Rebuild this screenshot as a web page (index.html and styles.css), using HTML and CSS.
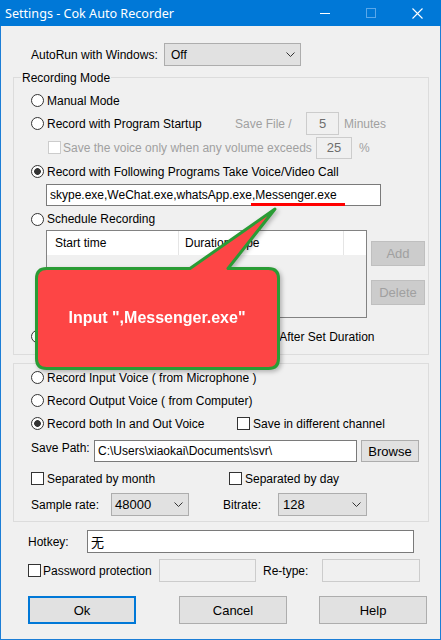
FILE: index.html
```html
<!DOCTYPE html>
<html lang="en">
<head>
    <meta charset="UTF-8">
    <title>Settings - Cok Auto Recorder</title>
    <link rel="stylesheet" href="styles.css">
</head>
<body>

<div class="window">
    <div class="titlebar">
        <span class="title">Settings - Cok Auto Recorder</span>
        <span class="winctl"><svg width="10" height="10" viewBox="0 0 10 10"><line x1="0" y1="5.5" x2="10" y2="5.5" stroke="#fff" stroke-width="1"/></svg></span>
        <span class="winctl"><svg width="10" height="10" viewBox="0 0 10 10"><rect x="0.5" y="0.5" width="9" height="9" fill="none" stroke="#5aa8ea" stroke-width="1"/></svg></span>
        <span class="winctl"><svg width="11" height="11" viewBox="0 0 11 11"><path d="M0.5 0.5 L10.5 10.5 M10.5 0.5 L0.5 10.5" stroke="#fff" stroke-width="1.1"/></svg></span>
    </div>

    <div class="main">
        <div class="row autorun">
            <span class="lbl-autorun">AutoRun with Windows:</span>
            <div class="select sel-autorun"><span>Off</span><svg width="9" height="5" viewBox="0 0 9 5"><polyline points="0.5,0.5 4.5,4.5 8.5,0.5" fill="none" stroke="#333"/></svg></div>
        </div>

        <div class="group g-mode">
            <span class="legend">Recording Mode</span>
            <div class="opt"><span class="radio"></span>Manual Mode</div>
            <div class="opt">
                <span class="radio"></span>
                <span class="w-startup">Record with Program Startup</span>
                <span class="dim w-savefile">Save File /</span>
                <span class="numbox nb-min">5</span>
                <span class="dim">Minutes</span>
            </div>
            <div class="opt opt-vol">
                <span class="chk dis"></span>
                <span class="dim w-vol">Save the voice only when any volume exceeds</span>
                <span class="numbox nb-pct">25</span>
                <span class="dim">%</span>
            </div>
            <div class="opt opt-tight"><span class="radio on"></span>Record with Following Programs Take Voice/Video Call</div>
            <div class="programs">skype.exe,WeChat.exe,whatsApp.exe<span class="mark">,Messenger.exe</span></div>
            <div class="opt opt-sched"><span class="radio"></span>Schedule Recording</div>
            <div class="schedule">
                <div class="list">
                    <div class="list-head">
                        <span class="col col1">Start time</span>
                        <span class="col col2">Duration Type</span>
                        <span class="col col3"></span>
                    </div>
                </div>
                <div class="side-btns">
                    <span class="btn btn-off">Add</span>
                    <span class="btn btn-off">Delete</span>
                </div>
            </div>
            <div class="opt opt-stop"><span class="radio"></span>Record with Schedule, and Stop Recording After Set Duration</div>
        </div>

        <div class="group g-voice">
            <div class="opt"><span class="radio"></span>Record Input Voice ( from Microphone )</div>
            <div class="opt"><span class="radio"></span>Record Output Voice ( from Computer)</div>
            <div class="opt">
                <span class="radio on"></span>
                <span class="w-both">Record both In and Out Voice</span>
                <span class="chk"></span>Save in different channel
            </div>
            <div class="row savepath">
                <span class="lbl-path">Save Path:</span>
                <div class="field path-field">C:\Users\xiaokai\Documents\svr\</div>
                <span class="btn btn-browse">Browse</span>
            </div>
            <div class="opt opt-sep">
                <span class="chk"></span>
                <span class="w-month">Separated by month</span>
                <span class="chk"></span>Separated by day
            </div>
            <div class="row rates">
                <span class="lbl-rate">Sample rate:</span>
                <div class="select sel-rate"><span>48000</span><svg width="9" height="5" viewBox="0 0 9 5"><polyline points="0.5,0.5 4.5,4.5 8.5,0.5" fill="none" stroke="#333"/></svg></div>
                <span class="lbl-bit">Bitrate:</span>
                <div class="select sel-bit"><span>128</span><svg width="9" height="5" viewBox="0 0 9 5"><polyline points="0.5,0.5 4.5,4.5 8.5,0.5" fill="none" stroke="#333"/></svg></div>
            </div>
        </div>

        <div class="row hotkey">
            <span class="lbl-hot">Hotkey:</span>
            <div class="field hot-field">无</div>
        </div>

        <div class="row password">
            <span class="chk"></span>
            <span class="w-pass">Password protection</span>
            <span class="field field-off pass1"></span>
            <span class="lbl-retype">Re-type:</span>
            <span class="field field-off pass2"></span>
        </div>

        <div class="row actions">
            <span class="btn btn-main btn-ok">Ok</span>
            <span class="btn btn-main btn-cancel">Cancel</span>
            <span class="btn btn-main btn-help">Help</span>
        </div>
    </div>

    <!-- annotation bubble pasted over the dialog -->
    <div class="callout">
        <svg width="260" height="180" viewBox="0 0 260 180">
            <path d="M16.5 68.5 H160 L245 9 L198 68.5 H238.5 Q248.5 68.5 248.5 78.5 V158.5 Q248.5 168.5 238.5 168.5 H16.5 Q6.5 168.5 6.5 158.5 V78.5 Q6.5 68.5 16.5 68.5 Z"
                  fill="#fd4545" stroke="#2a9c35" stroke-width="3" stroke-linejoin="round"/>
            <text x="127" y="123" text-anchor="middle" class="callout-text">Input ",Messenger.exe"</text>
        </svg>
    </div>
</div>

</body>
</html>
```

FILE: styles.css
```css
body {
    margin: 0;
    font-family: "Liberation Sans", Arial, sans-serif;
    font-size: 12px;
    color: #000;
}
.window {
    position: relative;
    width: 441px;
    height: 640px;
    display: flex;
    flex-direction: column;
}
.titlebar {
    height: 26px;
    background-color: #0078d7;
    color: #fff;
    display: flex;
    align-items: center;
    flex: none;
}
.title {
    flex: 1;
    margin-left: 5px;
    font-family: "Noto Sans", sans-serif;
    font-size: 12.6px;
}
.winctl {
    width: 46px;
    height: 26px;
    display: flex;
    align-items: center;
    justify-content: center;
}
.winctl:last-child {
    margin-right: 1px;
}
.main {
    flex: 1;
    background-color: #f0f0f0;
    border: 1px solid #1c7ed6;
    border-top: 0;
}
.row {
    display: flex;
    align-items: center;
}
.autorun {
    margin: 17px 0 0 30px;
    height: 23px;
}
.lbl-autorun {
    width: 133px;
}
.select {
    display: flex;
    align-items: center;
    justify-content: space-between;
    box-sizing: border-box;
    height: 23px;
    border: 1px solid #adadad;
    background-color: #e1e1e1;
    padding: 0 5px 0 4px;
}
.sel-autorun {
    width: 137px;
    padding-left: 6px;
}

/* group boxes */
.group {
    position: relative;
    box-sizing: border-box;
    width: 416px;
    margin-left: 12px;
    border: 1px solid #dcdcdc;
    padding-left: 17px;
}
.g-mode {
    margin-top: 11px;
    height: 278px;
    padding-top: 11px;
}
.g-voice {
    margin-top: 8px;
    height: 159px;
    padding-top: 2px;
}
.legend {
    position: absolute;
    left: 7px;
    top: -8px;
    padding: 0 1px;
    line-height: 16px;
    background-color: #f0f0f0;
}
.opt {
    display: flex;
    align-items: center;
    height: 23px;
    white-space: nowrap;
}
.radio {
    flex: none;
    box-sizing: border-box;
    width: 13px;
    height: 13px;
    border: 1px solid #333;
    border-radius: 50%;
    background-color: #fff;
    margin-right: 3px;
}
.radio.on {
    background: radial-gradient(circle, #333 0 3px, #fff 3.7px);
}
.chk {
    flex: none;
    box-sizing: border-box;
    width: 13px;
    height: 13px;
    border: 1px solid #333;
    background-color: #fff;
    margin-right: 3px;
}
.chk.dis {
    border-color: #cccccc;
    margin-right: 2px;
}
.dim {
    color: #a0a0a0;
}
.numbox {
    box-sizing: border-box;
    display: flex;
    align-items: center;
    justify-content: center;
    border: 1px solid #cccccc;
    color: #6d6d6d;
    font-size: 13px;
}
.w-startup { width: 188px; }
.w-savefile { width: 71px; }
.nb-min { width: 33px; height: 23px; margin-right: 5px; }
.opt-vol { margin: 1px 0 0 17px; }
.w-vol { width: 253px; }
.nb-pct { width: 36px; height: 22px; margin-right: 7px; }
.opt-tight { margin-top: 1px; }
.programs {
    box-sizing: border-box;
    width: 335px;
    height: 22px;
    margin: 1px 0 0 15px;
    border: 1px solid #7a7a7a;
    background-color: #fff;
    padding-left: 3px;
    line-height: 20px;
}
.mark {
    position: relative;
}
.mark::after {
    content: "";
    position: absolute;
    left: -1px;
    right: -8px;
    bottom: -4px;
    height: 3px;
    background-color: #f00;
}
.opt-sched {
    margin-top: 2px;
    height: 22px;
}
.schedule {
    display: flex;
    align-items: flex-start;
    margin-left: 15px;
}
.list {
    box-sizing: border-box;
    width: 321px;
    height: 88px;
    border: 1px solid #828282;
    background-color: #f0f0f0;
}
.list-head {
    display: flex;
    height: 24px;
    line-height: 24px;
    background-color: #fff;
}
.col {
    box-sizing: border-box;
    white-space: nowrap;
}
.col1 {
    width: 132px;
    padding-left: 8px;
    border-right: 1px solid #e5e5e5;
}
.col2 {
    width: 165px;
    padding-left: 6px;
    border-right: 1px solid #e5e5e5;
}
.col3 { flex: 1; }
.side-btns {
    display: flex;
    flex-direction: column;
    gap: 14px;
    margin-left: 4px;
    padding-top: 11px;
}
.btn {
    box-sizing: border-box;
    display: flex;
    align-items: center;
    justify-content: center;
    border: 1px solid #adadad;
    background-color: #e1e1e1;
}
.btn-off {
    width: 54px;
    height: 25px;
    border-color: #bfbfbf;
    background-color: #cccccc;
    color: #a0a0a0;
    font-size: 13px;
}
.opt-stop { margin-top: 7px; }

/* voice group */
.w-both { width: 190px; }
.savepath {
    margin-top: 5px;
    align-items: flex-start;
    height: 22px;
}
.lbl-path {
    width: 63px;
    line-height: 16px;
}
.field {
    box-sizing: border-box;
    border: 1px solid #7a7a7a;
    background-color: #fff;
    padding-left: 3px;
}
.path-field {
    width: 263px;
    height: 22px;
    line-height: 20px;
}
.btn-browse {
    width: 58px;
    height: 22px;
    margin-left: 4px;
    font-size: 13px;
}
.opt-sep { margin-top: 5px; }
.w-month { width: 182px; }
.rates {
    margin-top: 3px;
    height: 23px;
}
.lbl-rate { width: 80px; }
.sel-rate { width: 78px; padding-left: 3px; font-size: 13px; }
.lbl-bit { width: 55px; margin-left: 34px; }
.sel-bit { width: 89px; padding-left: 4px; font-size: 13px; }

/* bottom area */
.hotkey {
    margin: 8px 0 0 27px;
    height: 23px;
}
.lbl-hot { width: 59px; }
.hot-field {
    width: 327px;
    height: 23px;
    line-height: 21px;
    font-family: "Noto Sans CJK SC", sans-serif;
    font-size: 13px;
}
.password {
    margin: 6px 0 0 27px;
    height: 23px;
}
.password .chk { margin-right: 2px; }
.w-pass { width: 116px; }
.field-off {
    height: 23px;
    border-color: #cccccc;
    background-color: #f0f0f0;
}
.pass1 { width: 97px; }
.lbl-retype { width: 59px; margin-left: 7px; }
.pass2 { width: 98px; }
.actions {
    margin: 14px 0 0 27px;
}
.btn-main {
    width: 108px;
    height: 28px;
    font-size: 13px;
}
.btn-ok { border: 2px solid #0078d7; }
.btn-cancel { margin-left: 43px; }
.btn-help { margin-left: 32px; }

.callout {
    position: absolute;
    left: 30px;
    top: 200px;
    width: 260px;
    height: 180px;
    filter: drop-shadow(2px 2px 2px rgba(0, 0, 0, 0.25));
}
.callout-text {
    font-family: "Liberation Sans", Arial, sans-serif;
    font-weight: bold;
    font-size: 16px;
    fill: #fff;
}
```
